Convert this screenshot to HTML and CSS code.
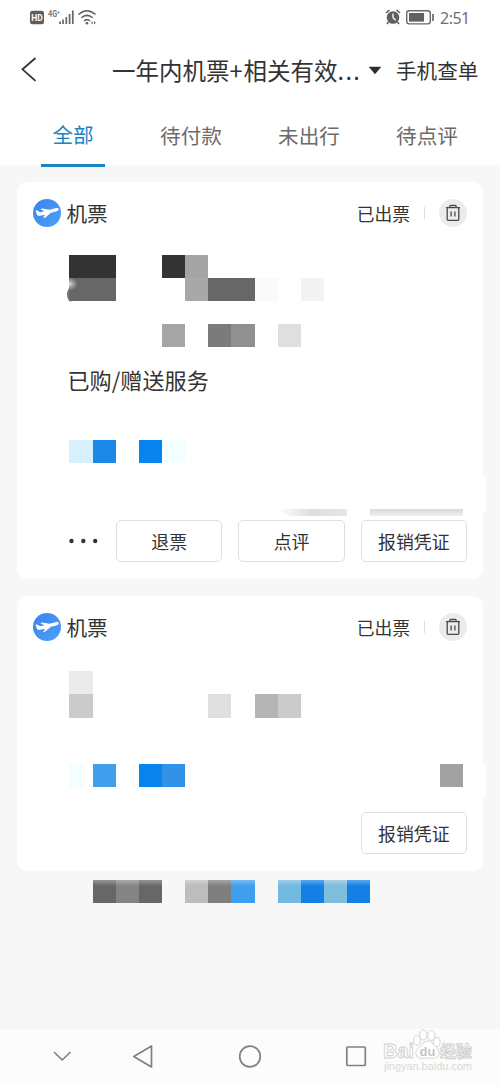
FILE: index.html
```html
<!DOCTYPE html>
<html lang="zh-CN">
<head>
<meta charset="utf-8">
<title>机票订单</title>
<link rel="stylesheet" href="styles.css">
</head>
<body>
<svg class="defs" width="0" height="0">
  <defs>
    <linearGradient id="sky" x1="0" y1="0" x2="1" y2="1"><stop offset="0" stop-color="#3a82ee"/><stop offset="1" stop-color="#4ba2f9"/></linearGradient>
    <symbol id="plane" viewBox="0 0 28 28">
      <circle cx="14" cy="14" r="14" fill="url(#sky)"/>
      <path d="M2.500 11.600l1.500-.2 3.300 1.900 4.200-1-4.200-2.100 1.800-.7 7.600 1.200 5.800-1.500c1.800-.4 3.100-.1 3.300.7.200 1-1 2-2.700 2.500l-5.200 1.400-5.600 4.700-2.200.8 1.800-3.600-4.900 1.100c-1.500.3-2.500-.1-3.100-1z" fill="#fff"/>
    </symbol>
    <symbol id="trash" viewBox="0 0 28 28">
      <circle cx="14" cy="14" r="14" fill="#ececec"/>
      <path d="M7 8.700h14M10.800 8.500V7.400q0-.9.900-.9h4.600q.9 0 .9.900v1.100M8.200 8.700v11.600q0 1 1 1h9.600q1 0 1-1V8.700M12.100 12.500v5M15.900 12.500v5" fill="none" stroke="#494949" stroke-width="1.300"/>
    </symbol>
  </defs>
</svg>
<div class="screen">
  <header class="top">
    <div class="status">
      <svg class="status-left" width="70" height="20" viewBox="0 0 70 20">
        <rect x="0" y="2.800" width="14" height="13.500" rx="2.500" fill="#5e5e5e"/>
        <text x="1.300" y="12.800" class="hd">HD</text>
        <text x="18" y="8.500" class="net" textLength="12" lengthAdjust="spacingAndGlyphs">4G⁺</text>
        <path d="M30 16v-2.500M33 16v-4.500M36.300 16V9M39.600 16V6M42.800 16V2.500" stroke="#666" stroke-width="1.700"/>
        <g fill="none" stroke="#606060" stroke-width="1.500">
          <path d="M48.500 6.500q8.500-7.500 17 0M51.300 9.800q5.700-4.800 11.400 0M54 13q3-2.400 6 0"/>
        </g>
        <circle cx="57" cy="15.300" r="1.300" fill="#606060"/>
        <path d="M62.500 13l-1.500 1.700 1.500 1.700zM64 13l1.700 1.700-1.700 1.700z" fill="#606060"/>
      </svg>
      <div class="status-right">
        <svg width="50" height="18" viewBox="0 0 50 18">
          <circle cx="8" cy="9.500" r="6.300" fill="#606060"/>
          <path d="M1 5l3.500-3M15 5l-3.500-3M3.500 14l-1.500 2M12.500 14l1.500 2" stroke="#606060" stroke-width="1.600"/>
          <path d="M8 5.500v4.200l2.700 2.500" fill="none" stroke="#fff" stroke-width="1.300"/>
          <rect x="21.700" y="2.700" width="23.600" height="13.200" rx="2.600" fill="none" stroke="#696969" stroke-width="1.400"/>
          <rect x="24" y="5" width="15" height="8.600" fill="#606060"/>
          <path d="M48 6v7" stroke="#696969" stroke-width="1.700"/>
        </svg>
        <span class="time">2:51</span>
      </div>
    </div>
    <div class="titlebar">
      <svg class="back" width="16" height="26" viewBox="0 0 16 26"><path d="M14.500 1L1.500 12.300l13 11.500" fill="none" stroke="#333" stroke-width="1.800"/></svg>
      <span class="title">一年内机票<span class="plus">+</span>相关有效<span class="dots">...</span></span>
      <svg class="caret" width="14" height="9" viewBox="0 0 14 9"><path d="M.7.800h12.600L7 8.200z" fill="#2d2d2d"/></svg>
      <span class="lookup">手机查单</span>
    </div>
    <nav class="tabs">
      <span class="tab active">全部</span>
      <span class="tab">待付款</span>
      <span class="tab">未出行</span>
      <span class="tab">待点评</span>
    </nav>
  </header>

  <main class="orders">
    <section class="card">
      <div class="card-head">
        <svg class="badge"><use href="#plane"/></svg>
        <span class="kind">机票</span>
        <span class="state">已出票</span>
        <i class="sep"></i>
        <svg class="badge"><use href="#trash"/></svg>
      </div>
      <div class="mosaic journey">
        <i class="c1 r1 w2 ink"></i><i class="c5 r1 ink"></i><i class="c6 r1 g-a4"></i>
        <i class="c1 r2 w2 g-67 smudge"></i><i class="c6 r2 g-a8"></i><i class="c7 r2 w2 g-67"></i><i class="c9 r2 g-fa"></i><i class="c11 r2 g-f3"></i>
        <i class="c5 r4 g-a5"></i><i class="c7 r4 g-7b"></i><i class="c8 r4 g-90"></i><i class="c10 r4 g-df"></i>
      </div>
      <div class="services">已购/赠送服务</div>
      <div class="mosaic extras">
        <i class="c1 r1 ice"></i><i class="c2 r1 blue-2"></i><i class="c4 r1 blue-1"></i><i class="c5 r1 mist"></i>
      </div>
      <div class="shades"><i class="shade fade"></i><i class="shade"></i></div>
      <div class="actions">
        <svg class="more" width="32" height="6" viewBox="0 0 32 6"><g fill="#333"><circle cx="3.500" cy="3" r="2.200"/><circle cx="15.300" cy="3" r="2.200"/><circle cx="27.200" cy="3" r="2.200"/></g></svg>
        <span class="btn">退票</span><span class="btn">点评</span><span class="btn">报销凭证</span>
      </div>
    </section>

    <section class="card second">
      <div class="card-head">
        <svg class="badge"><use href="#plane"/></svg>
        <span class="kind">机票</span>
        <span class="state">已出票</span>
        <i class="sep"></i>
        <svg class="badge"><use href="#trash"/></svg>
      </div>
      <div class="mosaic details">
        <i class="c1 r1 g-eb"></i>
        <i class="c1 r2 g-cb"></i><i class="c7 r2 g-df"></i><i class="c9 r2 g-b5"></i><i class="c10 r2 g-cb"></i>
        <i class="c1 r5 mist faint"></i><i class="c2 r5 blue-4"></i><i class="c4 r5 blue-1"></i><i class="c5 r5 blue-3"></i><i class="c17 r5 g-a2"></i>
      </div>
      <div class="actions"><span class="btn">报销凭证</span></div>
    </section>
    <div class="mosaic footer-row">
      <i class="c2 r1 g-67"></i><i class="c3 r1 g-84"></i><i class="c4 r1 g-67"></i><i class="c6 r1 g-bd"></i><i class="c7 r1 g-7f"></i><i class="c8 r1 blue-4"></i><i class="c10 r1 sky"></i><i class="c11 r1 blue-5"></i><i class="c12 r1 teal"></i><i class="c13 r1 blue-5"></i>
    </div>
  </main>

  <footer class="navbar">
    <svg class="nav-icons" width="370" height="54" viewBox="0 0 370 54">
      <g fill="none" stroke="#808080" stroke-width="1.700" stroke-linejoin="round">
        <path d="M54 23l8.200 8L70.500 23"/>
        <path d="M133.800 27.500L151.500 17v21z"/>
        <circle cx="250" cy="27.500" r="10.300"/>
        <rect x="346.800" y="18" width="18.500" height="18.500" rx="1"/>
      </g>
    </svg>
    <svg class="watermark" width="96" height="48" viewBox="0 0 96 48">
      <g fill="#fff" stroke="#cfcfcf" stroke-width=".9">
        <text x="1" y="28.500" class="wm-brand" textLength="31" lengthAdjust="spacingAndGlyphs">Bai</text>
        <path d="M35 27c-4-6 3-8 5.500-12 2.500-4 8.500-4 11 0 2.500 4 8 7 4.500 12-2.500 3.500-6 2-10 2s-8.500 1.500-11-2z"/>
        <ellipse cx="35" cy="11.500" rx="3.300" ry="4.700"/><ellipse cx="41.300" cy="6" rx="3.700" ry="5"/><ellipse cx="49.300" cy="6.500" rx="3.700" ry="5"/><ellipse cx="54.800" cy="13" rx="3.300" ry="4.500"/>
        <text x="58" y="27.500" class="wm-cn">经验</text>
      </g>
      <text x="37.500" y="26.500" class="wm-du">du</text>
      <text x="2" y="41" class="wm-url" textLength="88">jingyan.baidu.com</text>
    </svg>
  </footer>
</div>
</body>
</html>
```
FILE: styles.css
```css
* { box-sizing: border-box; }
body { margin: 0; background: #f7f7f7; color: #333; font-family: "Noto Sans CJK SC", sans-serif; }
.defs { display: block; }
.screen { width: 500px; height: 1084px; display: flex; flex-direction: column; overflow: hidden; }

.top { background: #fff; height: 165px; flex: none; }
.status { height: 36px; padding: 8px 30px 0; display: flex; justify-content: space-between; }
.status-left { display: block; }
.hd { font: bold 8.5px Roboto, sans-serif; fill: #fff; }
.net { font: bold 9px Roboto, sans-serif; fill: #777; }
.status-right { display: flex; gap: 5px; }
.time { font: 16px/20px "Noto Sans", sans-serif; color: #707070; width: 30px; white-space: nowrap; letter-spacing: -.5px; }
.titlebar { height: 68px; padding: 0 20px 0 21px; display: flex; align-items: center; }
.title { margin-left: 75px; width: 249px; font-size: 23.500px; line-height: 34px; white-space: nowrap; }
.plus { letter-spacing: 1px; }
.dots { letter-spacing: 1.300px; }
.caret { margin-left: 7px; }
.lookup { margin-left: 14px; font-size: 20.600px; line-height: 30px; white-space: nowrap; }
.tabs { height: 61px; padding: 0 14px; display: grid; grid-template-columns: repeat(4, 118px); }
.tab { font-size: 20.600px; line-height: 62px; text-align: center; color: #6b6b6b; }
.active { color: #1b84c4; line-height: 60px; justify-self: center; width: 64px; border-bottom: 3px solid #1b84c4; }

.orders { flex: 1; padding: 17px 17px 0; }
.card { height: 397px; background: #fff; border-radius: 10px; margin-bottom: 17px; display: flex; flex-direction: column; position: relative; }
.card::after { content: ""; position: absolute; right: -3px; top: 294px; width: 8px; height: 36px; background: #fff; border-radius: 3px; }
.second { height: 275px; margin-bottom: 9px; }
.second::after { top: 168px; height: 34px; }
.card-head { height: 61px; padding: 0 16px; display: flex; align-items: center; flex: none; }
.badge { width: 28px; height: 28px; flex: none; }
.kind { margin-left: 5.500px; font-size: 20.600px; line-height: 30px; padding-top: 1px; }
.state { margin-left: auto; font-size: 17.800px; line-height: 26px; }
.sep { width: 1px; height: 12px; margin: 0 14px; background: #dedede; }

.mosaic { display: grid; grid-template-columns: repeat(17, 23.170px); grid-auto-rows: 23.170px; margin-left: 52.400px; flex: none; }
.journey { margin-top: 11.700px; height: 92.700px; }
.services { margin-left: 50.500px; margin-top: 15.600px; font-size: 22.100px; line-height: 32px; }
.extras { margin-top: 45.300px; height: 23.170px; }
.details { margin-top: 14.300px; height: 115.900px; }
.footer-row i { background-image: linear-gradient(rgba(255,255,255,.3), transparent 6px); }
.c1 { grid-column-start: 1; } .c2 { grid-column-start: 2; } .c3 { grid-column-start: 3; }
.c4 { grid-column-start: 4; } .c5 { grid-column-start: 5; } .c6 { grid-column-start: 6; }
.c7 { grid-column-start: 7; } .c8 { grid-column-start: 8; } .c9 { grid-column-start: 9; }
.c10 { grid-column-start: 10; } .c11 { grid-column-start: 11; } .c12 { grid-column-start: 12; }
.c13 { grid-column-start: 13; } .c17 { grid-column-start: 17; }
.w2 { grid-column-end: span 2; }
.r1 { grid-row: 1; } .r2 { grid-row: 2; } .r4 { grid-row: 4; } .r5 { grid-row: 5; }
.ink { background-color: #333; }
.g-67 { background-color: #676767; } .g-7b { background-color: #7b7b7b; }
.g-7f { background-color: #7f7f7f; } .g-84 { background-color: #848484; }
.g-90 { background-color: #909090; } .g-a2 { background-color: #a2a2a2; }
.g-a4 { background-color: #a4a4a4; } .g-a5 { background-color: #a5a5a5; }
.g-a8 { background-color: #a8a8a8; } .g-b5 { background-color: #b5b5b5; }
.g-bd { background-color: #bdbdbd; } .g-cb { background-color: #cbcbcb; }
.g-df { background-color: #dfdfdf; } .g-eb { background-color: #ebebeb; }
.g-f3 { background-color: #f3f3f3; } .g-fa { background-color: #fafafa; }
.ice { background-color: #d6f1fd; } .mist { background-color: #f2feff; } .faint { width: 15px; }
.blue-1 { background-color: #0984ee; } .blue-2 { background-color: #1c89e8; }
.blue-3 { background-color: #3192e8; } .blue-4 { background-color: #3f9fec; }
.blue-5 { background-color: #1480e4; } .sky { background-color: #73bae3; } .teal { background-color: #80bddb; }
.smudge { background-image: radial-gradient(ellipse 9px 7px at 0 6px, #e4e4e4 0, rgba(180,180,180,.5) 60%, transparent 100%); position: relative; }
.smudge::before { content: ""; position: absolute; left: -2px; top: 9px; width: 7px; height: 15px; border-left: 2px solid #777; border-radius: 50%; }

.shades { display: flex; justify-content: flex-end; gap: 23px; margin: 45.500px 20px 0 0; height: 7px; }
.shade { width: 93px; background: linear-gradient(#d9d9d9, #f0f0f0); }
.fade { width: 70px; clip-path: polygon(0 0, 100% 0, 100% 100%, 20% 100%); background: linear-gradient(90deg, #fff, #dedede 50%, #e6e6e6); }
.actions { margin-top: auto; padding: 0 16px 16.600px 0; display: flex; justify-content: flex-end; align-items: center; gap: 16px; }
.btn { width: 106.300px; height: 42.500px; border: 1px solid #dedede; border-radius: 5px; text-align: center; font-size: 17.900px; line-height: 41px; }

.navbar { height: 55px; flex: none; background: #fcfcfc; display: flex; position: relative; }
.watermark { position: absolute; left: 382px; top: 0; overflow: visible; }
.wm-brand { font: bold 21px "Liberation Sans", sans-serif; }
.wm-cn { font: bold 16px "Noto Sans CJK SC", sans-serif; }
.wm-du { font: bold 13px "Liberation Sans", sans-serif; fill: #c4c4c4; }
.wm-url { font: 11px "Liberation Sans", sans-serif; fill: #d9d9d9; }
```
